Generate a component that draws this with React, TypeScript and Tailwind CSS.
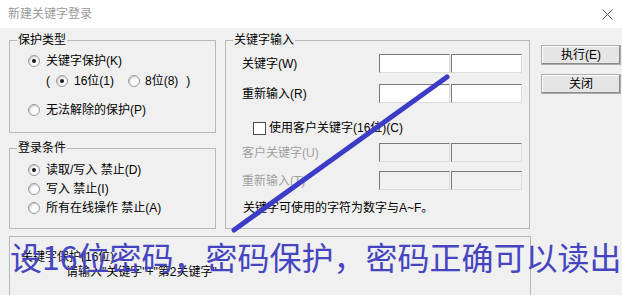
import type { ReactNode } from "react";

const font = { fontFamily: '"Liberation Sans", "Noto Sans CJK SC", sans-serif' };

function Radio({ checked }: { checked?: boolean }) {
  return (
    <span className="flex h-[12px] w-[12px] shrink-0 items-center justify-center rounded-full border border-[#9a9a9a] bg-white shadow-[inset_1px_1px_2px_rgba(0,0,0,0.25)]">
      {checked && <span className="h-[4px] w-[4px] rounded-full bg-[#1a1a1a]" />}
    </span>
  );
}

function Group({ title, className, children }: { title: string; className: string; children: ReactNode }) {
  return (
    <fieldset className={`border border-[#b8b8b8] ${className}`}>
      <legend className="ml-[7px] px-[1px] text-[12px] leading-[16px] text-black">{title}</legend>
      {children}
    </fieldset>
  );
}

function KeyBox({ disabled }: { disabled?: boolean }) {
  return (
    <div
      className={`h-[19px] w-[71px] border border-t-[#7a7a7a] border-l-[#7a7a7a] border-r-[#dcdcdc] border-b-[#dcdcdc] ${
        disabled ? "bg-[#f0f0f0]" : "bg-white"
      }`}
    />
  );
}

function KeyRow({ label, disabled, className }: { label: string; disabled?: boolean; className: string }) {
  return (
    <div className={`flex items-center pl-[16px] ${className}`}>
      <span className={`w-[137px] text-[12px] ${disabled ? "text-[#a0a0a0]" : "text-black"}`}>{label}</span>
      <div className="flex gap-[1px]">
        <KeyBox disabled={disabled} />
        <KeyBox disabled={disabled} />
      </div>
    </div>
  );
}

export default function App() {
  return (
    <div className="relative h-[295px] w-[622px] overflow-hidden bg-[#f0f0f0] text-[12px] text-black" style={font}>
      <div className="flex h-[28px] items-center justify-between bg-white pl-[8px] pr-[8px]">
        <span className="text-[12px] text-[#9a9a9a]">新建关键字登录</span>
        <svg width="11" height="11" viewBox="0 0 11 11" className="mr-[1px]">
          <path d="M0.5 0.5 L10.5 10.5 M10.5 0.5 L0.5 10.5" stroke="#555" strokeWidth="1" />
        </svg>
      </div>

      <div className="flex pl-[9px]">
        <div className="flex w-[207px] flex-col">
          <Group title="保护类型" className="mt-[4px] h-[101px]">
            <div className="flex flex-col pl-[18px] pt-[4px]">
              <div className="flex h-[18px] items-center gap-[6px]">
                <Radio checked />
                <span>关键字保护(K)</span>
              </div>
              <div className="mt-[2px] flex h-[18px] items-center pl-[18px]">
                <span className="mr-[6px]">(</span>
                <Radio checked />
                <span className="ml-[6px] mr-[14px]">16位(1)</span>
                <Radio />
                <span className="ml-[5px] mr-[8px]">8位(8)</span>
                <span>)</span>
              </div>
              <div className="mt-[11px] flex h-[18px] items-center gap-[6px]">
                <Radio />
                <span>无法解除的保护(P)</span>
              </div>
            </div>
          </Group>
          <Group title="登录条件" className="mt-[7px] h-[89px]">
            <div className="flex flex-col gap-[1px] pl-[18px] pt-[5px]">
              <div className="flex h-[18px] items-center gap-[6px]">
                <Radio checked />
                <span>读取/写入 禁止(D)</span>
              </div>
              <div className="flex h-[18px] items-center gap-[6px]">
                <Radio />
                <span>写入 禁止(I)</span>
              </div>
              <div className="flex h-[18px] items-center gap-[6px]">
                <Radio />
                <span>所有在线操作 禁止(A)</span>
              </div>
            </div>
          </Group>
        </div>

        <Group title="关键字输入" className="ml-[9px] mt-[4px] h-[197px] w-[305px]">
          <KeyRow label="关键字(W)" className="mt-[6px]" />
          <KeyRow label="重新输入(R)" className="mt-[11px]" />
          <div className="mt-[16px] flex h-[18px] items-center gap-[3px] pl-[27px]">
            <span className="h-[13px] w-[13px] border border-[#4a4a4a] bg-white" />
            <span>使用客户关键字(16位)(C)</span>
          </div>
          <KeyRow label="客户关键字(U)" disabled className="mt-[6px]" />
          <KeyRow label="重新输入(T)" disabled className="mt-[9px]" />
          <div className="mt-[9px] flex h-[18px] items-center pl-[17px]">关键字可使用的字符为数字与A~F。</div>
        </Group>

        <div className="ml-[11px] mt-[17px] flex w-[80px] flex-col gap-[9px]">
          <button className="h-[20px] border border-[#adadad] bg-[#e5e5e5] text-[12px] leading-none shadow-[inset_-1px_-1px_0_#8a8a8a,inset_1px_1px_0_#fff]">
            执行(E)
          </button>
          <button className="h-[20px] border border-[#adadad] bg-[#e5e5e5] text-[12px] leading-none shadow-[inset_-1px_-1px_0_#8a8a8a,inset_1px_1px_0_#fff]">
            关闭
          </button>
        </div>
      </div>

      <div className="ml-[9px] mt-[7px] h-[80px] w-[522px] border border-[#b8b8b8] pl-[11px] pt-[13px] leading-[15px]">
        <div>关键字保护(16位)</div>
        <div className="pl-[45px]">请输入"关键字"+"第2关键字"</div>
      </div>

      <svg className="pointer-events-none absolute left-0 top-0" width="622" height="295">
        <line x1="447" y1="77" x2="234" y2="230" stroke="#3c3cc6" strokeWidth="5" strokeLinecap="round" />
      </svg>
      <div
        className="pointer-events-none absolute left-[10px] top-[234px] whitespace-nowrap text-[32px] leading-[44px] text-[#4545c2]"
        style={{ fontFamily: '"Noto Sans CJK SC", sans-serif' }}
      >
        设16位密码，密码保护，密码正确可以读出
      </div>
    </div>
  );
}
